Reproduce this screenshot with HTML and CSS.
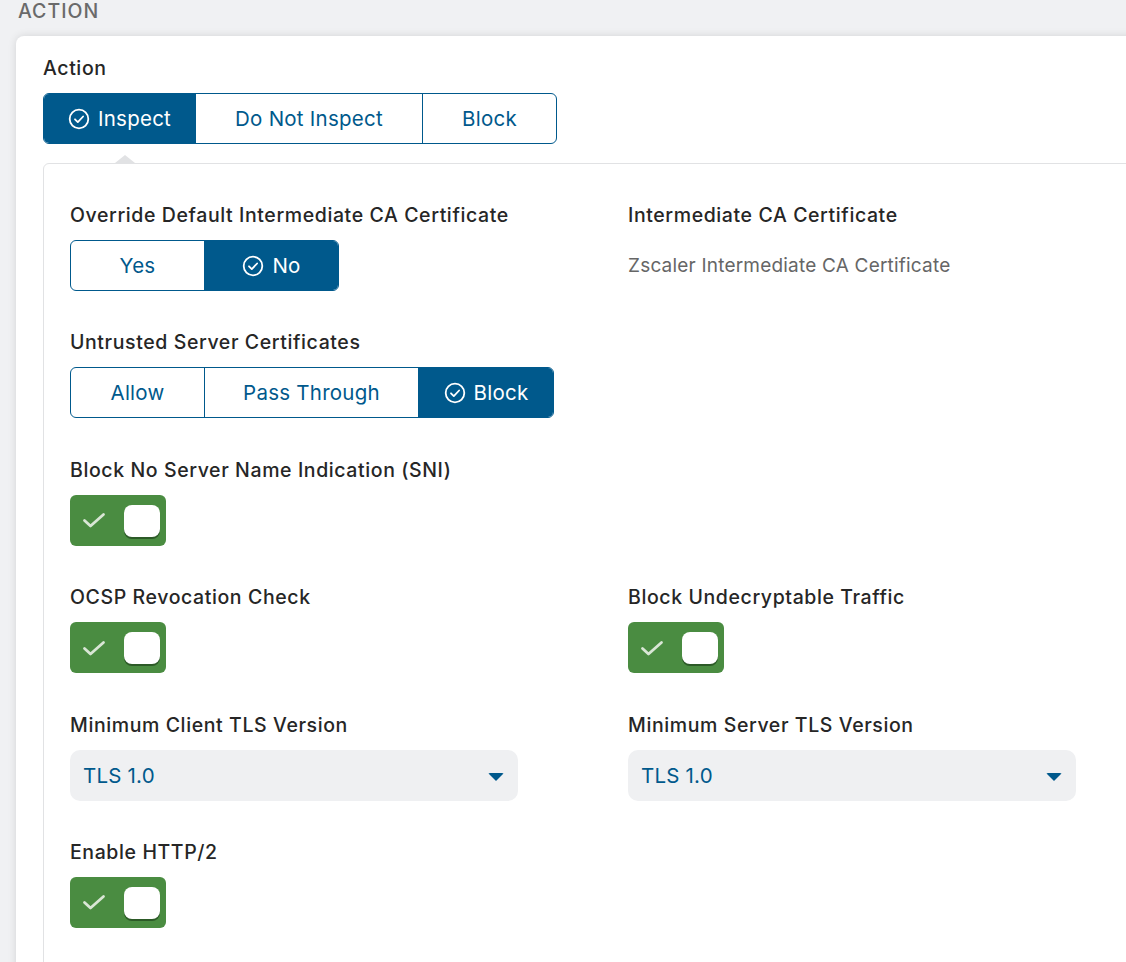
FILE: index.html
```html
<!DOCTYPE html>
<html>
<head>
<meta charset="utf-8">
<link rel="stylesheet" href="styles.css">
</head>
<body>
<div class="page">
  <div class="section-title">ACTION</div>
  <div class="card">
    <div class="label">Action</div>
    <div class="seg seg-action">
      <div class="opt on w152"><svg class="ico" viewBox="0 0 22 22"><circle cx="11" cy="11" r="9.3" fill="none" stroke="currentColor" stroke-width="1.8"/><path d="M7 11.3l2.8 2.8 5.3-5.6" fill="none" stroke="currentColor" stroke-width="1.8" stroke-linecap="round" stroke-linejoin="round"/></svg>Inspect</div>
      <div class="opt w227">Do Not Inspect</div>
      <div class="opt w135">Block</div>
    </div>
    <div class="panel">
      <div class="grid">
        <div class="field">
          <div class="label">Override Default Intermediate CA Certificate</div>
          <div class="seg">
            <div class="opt w133">Yes</div>
            <div class="opt on w135"><svg class="ico" viewBox="0 0 22 22"><circle cx="11" cy="11" r="9.3" fill="none" stroke="currentColor" stroke-width="1.8"/><path d="M7 11.3l2.8 2.8 5.3-5.6" fill="none" stroke="currentColor" stroke-width="1.8" stroke-linecap="round" stroke-linejoin="round"/></svg>No</div>
          </div>
        </div>
        <div class="field">
          <div class="label">Intermediate CA Certificate</div>
          <div class="value">Zscaler Intermediate CA Certificate</div>
        </div>

        <div class="field">
          <div class="label">Untrusted Server Certificates</div>
          <div class="seg">
            <div class="opt w133">Allow</div>
            <div class="opt w214">Pass Through</div>
            <div class="opt on w136"><svg class="ico" viewBox="0 0 22 22"><circle cx="11" cy="11" r="9.3" fill="none" stroke="currentColor" stroke-width="1.8"/><path d="M7 11.3l2.8 2.8 5.3-5.6" fill="none" stroke="currentColor" stroke-width="1.8" stroke-linecap="round" stroke-linejoin="round"/></svg>Block</div>
          </div>
        </div>
        <div class="field"></div>

        <div class="field">
          <div class="label">Block No Server Name Indication (SNI)</div>
          <div class="toggle"><svg class="tick" viewBox="0 0 24 16"><path d="M2.5 8.5l6 5.5L21.5 2.5" fill="none" stroke="currentColor" stroke-width="2.8" stroke-linecap="round" stroke-linejoin="round"/></svg><span class="knob"></span></div>
        </div>
        <div class="field"></div>

        <div class="field">
          <div class="label">OCSP Revocation Check</div>
          <div class="toggle"><svg class="tick" viewBox="0 0 24 16"><path d="M2.5 8.5l6 5.5L21.5 2.5" fill="none" stroke="currentColor" stroke-width="2.8" stroke-linecap="round" stroke-linejoin="round"/></svg><span class="knob"></span></div>
        </div>
        <div class="field">
          <div class="label">Block Undecryptable Traffic</div>
          <div class="toggle"><svg class="tick" viewBox="0 0 24 16"><path d="M2.5 8.5l6 5.5L21.5 2.5" fill="none" stroke="currentColor" stroke-width="2.8" stroke-linecap="round" stroke-linejoin="round"/></svg><span class="knob"></span></div>
        </div>

        <div class="field">
          <div class="label">Minimum Client TLS Version</div>
          <div class="select"><span>TLS 1.0</span><span class="caret"></span></div>
        </div>
        <div class="field">
          <div class="label">Minimum Server TLS Version</div>
          <div class="select"><span>TLS 1.0</span><span class="caret"></span></div>
        </div>

        <div class="field">
          <div class="label">Enable HTTP/2</div>
          <div class="toggle"><svg class="tick" viewBox="0 0 24 16"><path d="M2.5 8.5l6 5.5L21.5 2.5" fill="none" stroke="currentColor" stroke-width="2.8" stroke-linecap="round" stroke-linejoin="round"/></svg><span class="knob"></span></div>
        </div>
      </div>
    </div>
  </div>
</div>
</body>
</html>
```
FILE: styles.css
```css
html, body {
  margin: 0;
  padding: 0;
  background: #f0f1f3;
  font-family: Inter, "Noto Sans", "Liberation Sans", sans-serif;
  color: #262626;
  overflow: hidden;
}
.page {
  width: 1126px;
  height: 962px;
  overflow: hidden;
}
.section-title {
  padding: 0 0 0 18px;
  height: 36px;
  line-height: 22px;
  font-size: 19.5px;
  font-weight: 500;
  color: #6a6a6a;
  letter-spacing: 1px;
}
.card {
  margin-left: 16px;
  width: 1200px;
  background: #fff;
  border-radius: 8px;
  box-shadow: 0 0 8px rgba(0,0,0,0.12);
  padding: 20px 0 0 27px;
  height: 1000px;
  box-sizing: border-box;
}
.label {
  font-size: 19.5px;
  font-weight: 500;
  line-height: 24px;
  height: 24px;
  margin-bottom: 13px;
  color: #262626;
  letter-spacing: 0.6px;
  white-space: nowrap;
}
.seg {
  display: flex;
  height: 51px;
  border: 1px solid #00598c;
  border-radius: 6px;
  overflow: hidden;
  box-sizing: border-box;
  width: max-content;
}
.opt {
  display: flex;
  align-items: center;
  justify-content: center;
  font-size: 20.5px;
  letter-spacing: 0.25px;
  color: #00598c;
  border-left: 1px solid #00598c;
  box-sizing: border-box;
}
.opt:first-child { border-left: none; }
.opt.on {
  background: #00598c;
  color: #fff;
}
.ico {
  width: 22px;
  height: 22px;
  margin-right: 8px;
}
.w152 { width: 151px; }
.w227 { width: 227px; }
.w135 { width: 134px; }
.w133 { width: 133px; }
.w214 { width: 214px; }
.w136 { width: 135px; }
.panel {
  position: relative;
  margin-top: 19px;
  border: 1px solid #e1e2e4;
  border-radius: 6px;
  padding: 39px 0 0 26px;
  height: 900px;
}
.panel::before {
  content: "";
  position: absolute;
  left: 71px;
  top: -9px;
  border-left: 10px solid transparent;
  border-right: 10px solid transparent;
  border-bottom: 8px solid #e1e2e4;
}
.grid {
  display: grid;
  grid-template-columns: 558px 500px;
  row-gap: 39.4px;
}
.value {
  height: 51px;
  display: flex;
  align-items: center;
  font-size: 19px;
  letter-spacing: 0.2px;
  color: #666;
}
.toggle {
  width: 96px;
  height: 51px;
  border-radius: 6px;
  background: #4a8c41;
  position: relative;
  display: flex;
  align-items: center;
}
.tick {
  width: 24px;
  height: 16px;
  margin-left: 12px;
  color: #d9e6d5;
}
.knob {
  position: absolute;
  left: 54px;
  top: 10px;
  width: 36px;
  height: 32px;
  border-radius: 8px;
  background: #fff;
  box-shadow: 0 2px 0 #2c5a27;
}
.select {
  width: 448px;
  height: 51px;
  background: #eff0f2;
  border-radius: 10px;
  display: flex;
  align-items: center;
  justify-content: space-between;
  padding: 0 14px 0 13px;
  box-sizing: border-box;
  font-size: 20.5px;
  letter-spacing: 0.2px;
  color: #00598c;
}
.caret {
  width: 0;
  height: 0;
  border-left: 8px solid transparent;
  border-right: 8px solid transparent;
  border-top: 8px solid #00598c;
  margin-top: 3px;
  border-radius: 2px;
}
```
